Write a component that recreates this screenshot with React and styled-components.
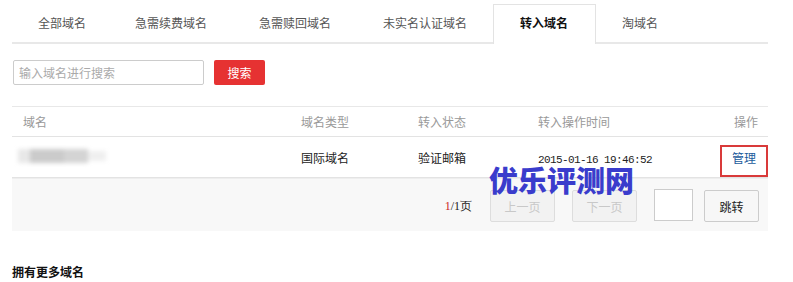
import React from "react";
import styled, { createGlobalStyle } from "styled-components";

const Global = createGlobalStyle`
  *, *::before, *::after { box-sizing: border-box; }
  html, body { margin: 0; padding: 0; background: #fff; }
  body { font-family: "Noto Sans CJK SC", "DejaVu Sans", sans-serif; font-size: 12px; color: #333; }
`;

const Page = styled.div`
  width: 768px;
  padding: 4px 0 0 12px;
  position: relative;
`;

const Tabs = styled.div`
  display: flex;
  align-items: flex-start;
  height: 40px;
  border-bottom: 2px solid #e8e8e8;
`;

const Tab = styled.div`
  padding: 0 ${(p) => (p.$first ? 22 : p.$active ? 27 : 25)}px 0 ${(p) => (p.$active ? 26 : 25)}px;
  line-height: 36px;
  font-size: 12px;
  color: ${(p) => (p.$active ? "#111" : "#555")};
  font-weight: ${(p) => (p.$active ? 700 : 400)};
  background: #fff;
  border: 1px solid ${(p) => (p.$active ? "#e3e3e3" : "transparent")};
  border-bottom: none;
  height: ${(p) => (p.$active ? 40 : 37)}px;
  position: ${(p) => (p.$active ? "relative" : "static")};
`;

const SearchRow = styled.div`
  display: flex;
  gap: 10px;
  margin-top: 16px;
  padding-left: 1px;
`;

const SearchInput = styled.input`
  width: 191px;
  height: 25px;
  padding: 1px 5px;
  border: 1px solid #ccc;
  border-radius: 2px;
  font-family: inherit;
  font-size: 12px;
  outline: none;
  &::placeholder { color: #aaa; }
`;

const RedButton = styled.button`
  width: 51px;
  height: 25px;
  border: none;
  border-radius: 2px;
  background: #e63232;
  color: #fff;
  font-family: inherit;
  font-size: 12px;
  padding: 0;
`;

const Table = styled.div`
  margin-top: 21px;
  border-top: 1px solid #e8e8e8;
`;

const Row = styled.div`
  display: grid;
  grid-template-columns: 289px 117px 120px 1fr 60px;
  align-items: center;
  height: ${(p) => (p.$head ? 30 : 41)}px;
  border-bottom: 1px solid #e3e3e3;
  color: ${(p) => (p.$head ? "#999" : "#222")};
`;

const Cell = styled.div`
  padding-left: ${(p) => p.$pl ?? 0}px;
  text-align: ${(p) => (p.$right ? "right" : "left")};
  padding-right: ${(p) => (p.$right ? 10 : 0)}px;
`;

const Blur = styled.div`
  display: flex;
  align-items: center;
  filter: blur(2px);
  padding-left: 6px;
  margin-top: -2px;
`;

const BlurBlock = styled.span`
  display: inline-block;
  width: ${(p) => p.$w}px;
  height: ${(p) => p.$h ?? 14}px;
  background: ${(p) => p.$c};
`;

const Time = styled.span`
  font-family: "Liberation Mono", monospace;
  font-size: 11px;
  letter-spacing: -0.6px;
  color: #222;
`;

const ManageBox = styled.div`
  justify-self: end;
  width: 48px;
  height: 32px;
  border: 2px solid #d93a3a;
  display: flex;
  align-items: center;
  justify-content: center;
  margin-top: 8px;
  padding-bottom: 8px;
`;

const Link = styled.a`
  color: #1a5b9c;
  text-decoration: none;
  font-size: 12px;
`;

const Pager = styled.div`
  display: flex;
  align-items: center;
  justify-content: flex-end;
  height: 53px;
  background: #f8f8f8;
  border-top: 1px solid #eee;
  padding-right: 9px;
  padding-top: 2px;
`;

const PageInfo = styled.span`
  font-family: "Liberation Serif", serif;
  font-size: 12px;
  color: #222;
  margin-right: 18px;
  & b { color: #c22; font-weight: 400; }
`;

const PageBtn = styled.button`
  width: ${(p) => p.$w}px;
  height: 32px;
  margin-right: ${(p) => p.$mr ?? 0}px;
  border: 1px solid ${(p) => (p.$disabled ? "#ddd" : "#ccc")};
  border-radius: 2px;
  background: ${(p) => (p.$disabled ? "#f2f2f2" : "#f7f7f7")};
  color: ${(p) => (p.$disabled ? "#c8c8c8" : "#222")};
  font-family: inherit;
  font-size: 12px;
  padding: 0;
`;

const PageInput = styled.input`
  width: 39px;
  height: 32px;
  border: 1px solid #ccc;
  background: #fff;
  padding: 1px;
  margin-right: 11px;
  margin-top: -2px;
`;

const MoreTitle = styled.div`
  margin-top: 33px;
  font-weight: 700;
  font-size: 12px;
  line-height: 16px;
  color: #111;
`;

const Watermark = styled.div`
  position: absolute;
  left: 489px;
  top: 159px;
  font-size: 29px;
  font-weight: 900;
  color: #3a3ccc;
  line-height: 40px;
  font-family: "Noto Sans CJK SC", sans-serif;
`;

const tabs = ["全部域名", "急需续费域名", "急需赎回域名", "未实名认证域名", "转入域名", "淘域名"];

export default function App() {
  return (
    <Page>
      <Global />
      <Tabs>
        {tabs.map((t, i) => (
          <Tab key={t} $first={i === 0} $active={t === "转入域名"}>{t}</Tab>
        ))}
      </Tabs>
      <SearchRow>
        <SearchInput placeholder="输入域名进行搜索" />
        <RedButton>搜索</RedButton>
      </SearchRow>
      <Table>
        <Row $head>
          <Cell $pl={11}>域名</Cell>
          <Cell>域名类型</Cell>
          <Cell>转入状态</Cell>
          <Cell>转入操作时间</Cell>
          <Cell $right>操作</Cell>
        </Row>
        <Row>
          <Blur>
            <BlurBlock $w={12} $c="#e8e8e8" />
            <BlurBlock $w={34} $c="#cbcbcb" />
            <BlurBlock $w={24} $c="#d4d4d4" />
            <BlurBlock $w={18} $h={10} $c="#efefef" />
          </Blur>
          <Cell>国际域名</Cell>
          <Cell>验证邮箱</Cell>
          <Cell><Time>2015-01-16 19:46:52</Time></Cell>
          <ManageBox><Link href="#">管理</Link></ManageBox>
        </Row>
        <Pager>
          <PageInfo><b>1</b>/1页</PageInfo>
          <PageBtn $w={65} $mr={17} $disabled>上一页</PageBtn>
          <PageBtn $w={65} $mr={17} $disabled>下一页</PageBtn>
          <PageInput />
          <PageBtn $w={55}>跳转</PageBtn>
        </Pager>
      </Table>
      <MoreTitle>拥有更多域名</MoreTitle>
      <Watermark>优乐评测网</Watermark>
    </Page>
  );
}
